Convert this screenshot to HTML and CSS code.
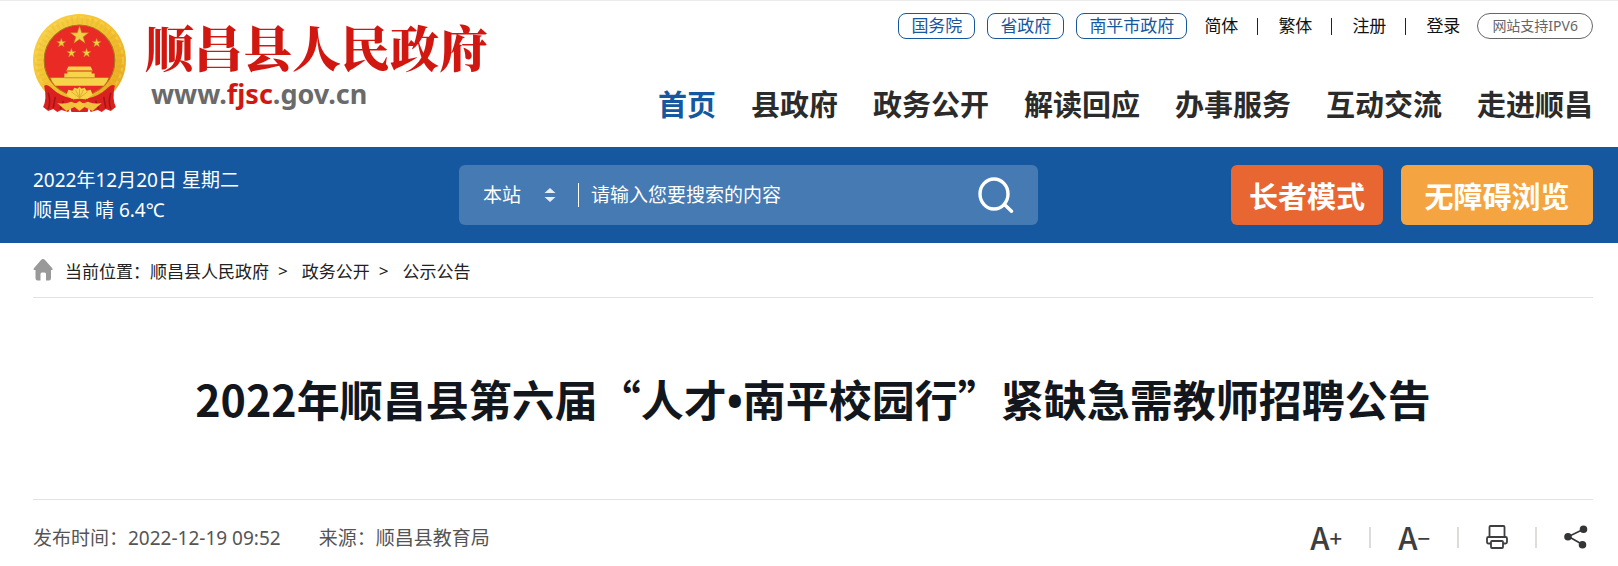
FILE: index.html
```html
<!DOCTYPE html>
<html lang="zh-CN">
<head>
<meta charset="utf-8">
<title>2022年顺昌县第六届“人才•南平校园行”紧缺急需教师招聘公告</title>
<link rel="stylesheet" href="styles.css">
</head>
<body>
<header class="header">
  <a class="logo" href="#">
    <svg class="emblem" viewBox="0 0 92 98" aria-hidden="true">
      <defs>
        <linearGradient id="gold" x1="0" y1="0" x2="1" y2="1">
          <stop offset="0" stop-color="#f8d44c"/>
          <stop offset="0.5" stop-color="#f3c02f"/>
          <stop offset="1" stop-color="#e5a41f"/>
        </linearGradient>
      </defs>
      <circle cx="46" cy="46" r="46" fill="url(#gold)"/>
      <circle cx="46" cy="46" r="40" fill="none" stroke="#d99a1c" stroke-width="7" stroke-dasharray="2 3" opacity=".15"/>
      <circle cx="46" cy="46" r="43" fill="none" stroke="#fbe06a" stroke-width="2" stroke-dasharray="4 3" opacity=".4"/>
      <circle cx="46" cy="46" r="35" fill="#ea2a24" stroke="#a8781c" stroke-width="1"/>
      <g fill="#f2cf45" stroke="#c47a1d" stroke-width=".5">
        <path d="M46 12 L48.200 18.600 L55 18.600 L49.600 22.700 L51.600 29 L46 25 L40.400 29 L42.400 22.700 L37 18.600 L43.800 18.600Z"/>
        <path d="M28 24 L29.100 27.100 L32.500 27.200 L29.800 29.200 L30.800 32.500 L28 30.600 L25.200 32.500 L26.200 29.200 L23.500 27.200 L26.900 27.100Z"/>
        <path d="M63 24 L64.100 27.100 L67.500 27.200 L64.800 29.200 L65.800 32.500 L63 30.600 L60.200 32.500 L61.200 29.200 L58.500 27.200 L61.900 27.100Z"/>
        <path d="M38 34 L39.100 37.100 L42.500 37.200 L39.800 39.200 L40.800 42.500 L38 40.600 L35.200 42.500 L36.200 39.200 L33.500 37.200 L36.900 37.100Z"/>
        <path d="M53 34 L54.100 37.100 L57.500 37.200 L54.800 39.200 L55.800 42.500 L53 40.600 L50.200 42.500 L51.200 39.200 L48.500 37.200 L51.900 37.100Z"/>
      </g>
      <path d="M35 52 H57 L59 56 H33Z M34 57 H58 V60 H34Z M31 59 H61 V63 H31Z M17 63 H75 L73 67 H19Z M19 67 H73 L70 71 H22Z" fill="#f7d24b"/>
      <path d="M33 56.500 H59 M31 63 H61" stroke="#d9851d" stroke-width="1"/>
      <path d="M11 71 Q14 69 18 73 Q27 82 40 84 L35 97 L28 95 L24 97 L20 94 L15 96 L10 92 Q14 84 11 71Z M81 71 Q78 69 74 73 Q65 82 52 84 L57 97 L64 95 L68 97 L72 94 L77 96 L82 92 Q78 84 81 71Z" fill="#db211f"/>
      <path d="M15 78 Q18 87 15 94 M22 82 L20 93 M30 86 L27 94 M77 78 Q74 87 77 94 M70 82 L72 93 M62 86 L65 94" fill="none" stroke="#9f1518" stroke-width="1.500"/>
      <path d="M36 90 H56 L54 97 H38Z" fill="#db211f"/>
      <path d="M24 88 Q34 90 41 85 L51 85 Q58 90 68 88 L59 96 L51 92 L46 96 L41 92 L33 96Z" fill="#f0c23b"/>
      <path d="M33 80 L35 75 L39 76 L41 73 L44 74 L46 72 L48 74 L51 73 L53 76 L57 75 L59 80 L54 84 H38Z" fill="#f8d44c"/>
      <path d="M46 83 L38 77 M46 83 L42 75 M46 83 V74 M46 83 L50 75 M46 83 L54 77" stroke="#dea02a" stroke-width=".8"/>
      <path d="M36 86 Q46 82 56 86 L51 88 H41Z" fill="#e02a20"/>
      <path d="M40 90 L46 86 L52 90 L46 95Z" fill="#f4c83d"/>
    </svg>
    <span class="brand">
      <span class="brand-name">顺昌县人民政府</span>
      <span class="brand-url">www.<span class="brand-key">fjsc</span>.gov.cn</span>
    </span>
  </a>
  <div class="header-side">
    <div class="top-links">
      <a class="tag" href="#">国务院</a>
      <a class="tag" href="#">省政府</a>
      <a class="tag" href="#">南平市政府</a>
      <span class="account">
        <a href="#">简体</a><i class="bar"></i><a href="#">繁体</a><i class="bar"></i><a href="#">注册</a><i class="bar"></i><a href="#">登录</a>
      </span>
      <a class="ipv6" href="#">网站支持IPV6</a>
    </div>
    <nav class="nav">
      <a class="active" href="#">首页</a>
      <a href="#">县政府</a>
      <a href="#">政务公开</a>
      <a href="#">解读回应</a>
      <a href="#">办事服务</a>
      <a href="#">互动交流</a>
      <a href="#">走进顺昌</a>
    </nav>
  </div>
</header>

<section class="band">
  <div class="weather">
    <div>2022年12月20日 星期二</div>
    <div>顺昌县 晴 6.4℃</div>
  </div>
  <form class="search">
    <label class="scope">
      <select aria-label="搜索范围"><option>本站</option></select>
      <svg width="12" height="14" viewBox="0 0 12 14" fill="#e6eef6" aria-hidden="true"><path d="M6 0 L11.500 5 H.5Z M6 14 L11.500 9 H.5Z"/></svg>
    </label>
    <input class="query" type="text" placeholder="请输入您要搜索的内容" aria-label="搜索内容">
    <button class="go" type="button" aria-label="搜索">
      <svg width="36" height="36" viewBox="0 0 36 36" fill="none" stroke="#fff" stroke-width="3.400" stroke-linecap="round" aria-hidden="true"><ellipse cx="16" cy="17" rx="14" ry="15"/><path d="M26.500 27.500 L33.500 34.300"/></svg>
    </button>
  </form>
  <div class="modes">
    <button class="mode elder" type="button">长者模式</button>
    <button class="mode access" type="button">无障碍浏览</button>
  </div>
</section>

<main class="main">
  <nav class="crumbs">
    <svg width="20" height="22" viewBox="0 0 20 22" fill="#999" aria-hidden="true"><path d="M10 0 Q11 0 12 1 L19.500 9.500 Q20 11 18.500 11 H18 V19 Q18 21.500 16 21.500 H13 V15 Q13 13.500 11.500 13.500 H9 Q7.500 13.500 7.500 15 V21.500 H4.500 Q2.500 21.500 2.500 19 V11 H1.500 Q0 11 .7 9.500 L8 1 Q9 0 10 0Z"/></svg>
    <span class="here">当前位置：</span>
    <a href="#">顺昌县人民政府</a><span class="sep">&gt;</span>
    <a href="#">政务公开</a><span class="sep">&gt;</span>
    <a href="#">公示公告</a>
  </nav>
  <h1 class="title">2022年顺昌县第六届“人才<span class="dot">•</span>南平校园行”紧缺急需教师招聘公告</h1>
  <div class="meta">
    <div class="facts">
      <span>发布时间：2022-12-19 09:52</span>
      <span>来源：顺昌县教育局</span>
    </div>
    <div class="tools">
      <button class="size" type="button" aria-label="放大字体">A<span class="sign">+</span></button>
      <i class="rule"></i>
      <button class="size" type="button" aria-label="缩小字体">A<span class="sign">−</span></button>
      <i class="rule"></i>
      <button type="button" aria-label="打印">
        <svg width="22" height="24" viewBox="0 0 22 24" fill="none" stroke="#3c3e3f" stroke-width="1.800" stroke-linejoin="round" aria-hidden="true"><path d="M3.500 12 V2 Q3.500 1 4.500 1 H17.500 Q18.500 1 18.500 2 V12 M5 18.500 H2.500 Q1 18.500 1 17 V13.500 Q1 12 2.500 12 H19.500 Q21 12 21 13.500 V17 Q21 18.500 19.500 18.500 H17 M6 16 H16 Q17 16 17 17 V22 Q17 23 16 23 H6 Q5 23 5 22 V17 Q5 16 6 16Z"/></svg>
      </button>
      <i class="rule"></i>
      <button type="button" aria-label="分享">
        <svg width="24" height="24" viewBox="0 0 24 24" fill="#333536" stroke="#333536" stroke-width="1.600" aria-hidden="true"><path d="M19 4.500 L4.500 11.500 L18.500 19.500" fill="none"/><circle cx="19.500" cy="4.300" r="3"/><circle cx="4" cy="11.700" r="3"/><circle cx="18.500" cy="19.700" r="3"/></svg>
      </button>
    </div>
  </div>
</main>
</body>
</html>
```
FILE: styles.css
```css
* { box-sizing: border-box; }

body {
  margin: 0;
  border-top: 1px solid #ebebeb;
  background: #fff;
  color: #111;
  font-family: "Noto Sans", "Noto Sans CJK SC", sans-serif;
  font-size: 17px;
}

a { color: inherit; text-decoration: none; }

button, input, select {
  padding: 0;
  border: 0;
  background: none;
  color: inherit;
  font: inherit;
}

button { cursor: pointer; }
svg { display: block; flex: none; }

.header, .band, .main { padding: 0 25px 0 33px; }

.header {
  display: flex;
  justify-content: space-between;
  height: 146px;
}

.logo { display: flex; gap: 19px; padding-top: 13px; }
.emblem { width: 93px; height: 99px; }
.brand { display: flex; flex-direction: column; }

.brand-name {
  padding-top: 2px;
  color: #d1170f;
  font-family: "Noto Serif CJK SC", "Noto Sans CJK SC", serif;
  font-size: 49px;
  font-weight: 900;
  line-height: 60px;
}

.brand-url {
  padding-left: 6px;
  color: #6a6a6a;
  font-size: 27px;
  font-weight: 700;
  line-height: 36px;
}

.brand-key { color: #d1170f; }

.header-side {
  display: flex;
  flex-direction: column;
  align-items: flex-end;
  padding-top: 12px;
}

.top-links { display: flex; gap: 12px; line-height: 24px; }

.tag {
  padding: 0 12px;
  border: 1px solid #16589f;
  border-radius: 8px;
  color: #16589f;
}

.account { display: flex; align-items: center; padding: 0 5px; }
.bar { width: 1px; height: 17px; margin: 0 20px 0 19px; background: #222; }

.ipv6 {
  padding: 0 14px;
  border: 1px solid #666;
  border-radius: 13px;
  color: #666;
  font-size: 14px;
}

.nav {
  display: flex;
  gap: 35px;
  margin-top: 44px;
  color: #2b2b2b;
  font-size: 29px;
  font-weight: 700;
  line-height: 44px;
}

.nav .active { color: #16589f; }

.band {
  display: grid;
  grid-template-columns: 426px minmax(0, 579px) 1fr;
  align-items: center;
  height: 96px;
  background: #16589f;
  color: #fff;
  font-size: 19px;
}

.weather { line-height: 30px; }

.search {
  display: flex;
  align-items: center;
  height: 60px;
  padding: 0 24px;
  border-radius: 6px;
  background: #457ab3;
}

.scope {
  display: flex;
  align-items: center;
  gap: 22px;
  padding-right: 22px;
  border-right: 1px solid #fff;
  line-height: 24px;
}

.scope select { height: 24px; appearance: none; line-height: 24px; }
.query { flex: 1; min-width: 0; padding-left: 12px; }
.query::placeholder { color: #fff; opacity: 1; }
.modes { display: flex; justify-content: flex-end; gap: 18px; }

.mode {
  height: 60px;
  padding: 0 18px;
  border-radius: 6px;
  font-size: 29px;
  font-weight: 700;
}

.elder { background: #e86632; }
.access { min-width: 192px; background: #f4a541; }

.crumbs {
  display: flex;
  align-items: center;
  height: 55px;
  border-bottom: 1px solid #e2e2e2;
  color: #222;
}

.here { padding-left: 12px; }
.sep { padding: 0 14px 0 9px; }

.title {
  margin: 0;
  padding: 70px 0 71px;
  border-bottom: 1px solid #e2e2e2;
  color: #12161d;
  font-family: "Noto Sans CJK SC", sans-serif;
  font-size: 43px;
  font-weight: 700;
  line-height: 60px;
  text-align: center;
}

.dot {
  font-family: "Noto Sans", sans-serif;
  line-height: 1;
}

.meta {
  display: flex;
  align-items: center;
  justify-content: space-between;
  height: 66px;
  padding-top: 8px;
  color: #555;
  font-size: 19px;
}

.facts { display: flex; gap: 38px; }
.tools { display: flex; align-items: center; gap: 27px; padding-right: 5px; color: #3c3e3f; }

.size {
  display: flex;
  align-items: center;
  font-family: "Noto Sans CJK SC", sans-serif;
  font-size: 31px;
  font-weight: 500;
  line-height: 28px;
}

.sign { font-size: 22px; }
.rule { width: 2px; height: 21px; background: #dfdbdb; }
```
